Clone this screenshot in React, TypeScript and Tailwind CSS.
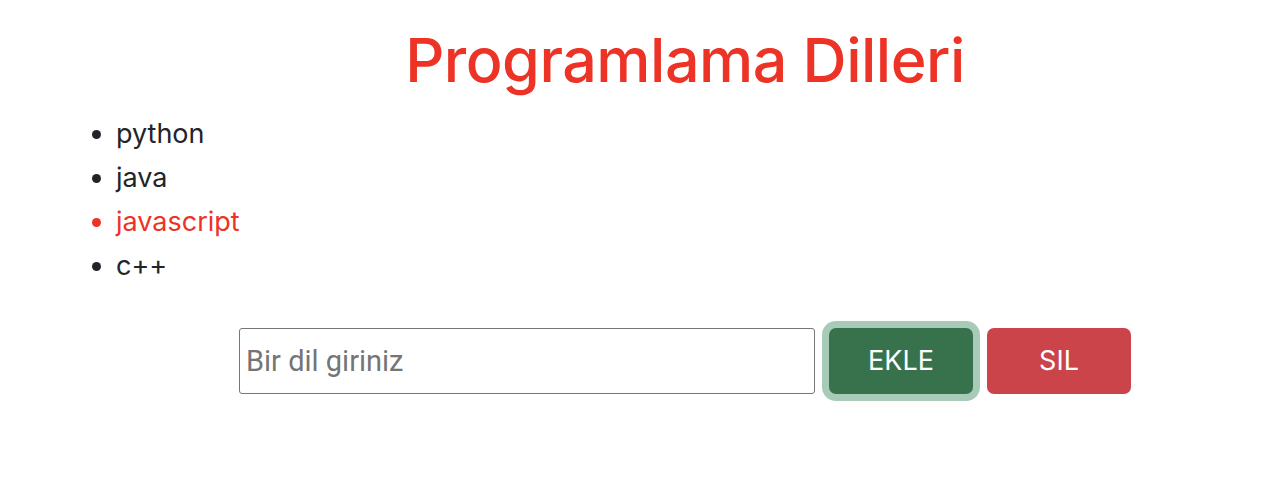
import React from "react";

export default function App() {
  const items = [
    { t: "python", red: false },
    { t: "java", red: false },
    { t: "javascript", red: true },
    { t: "c++", red: false },
  ];
  return (
    <div className="w-[1276px] h-[494px] bg-white font-['Inter','Noto_Sans',sans-serif] text-[#212529]">
      <div className="ml-[94px] flex flex-col">
        <h1 className="text-center text-[61px] leading-[64px] font-medium text-[#ec3326] pt-[28px] tracking-[-0.5px]">
          Programlama Dilleri
        </h1>
        <ul className="mt-[20px] ml-[22px] list-disc pl-0 text-[27px] leading-[44px]">
          {items.map((i) => (
            <li key={i.t} className={i.red ? "text-[#ec3326] marker:text-[#ec3326]" : ""}>
              {i.t}
            </li>
          ))}
        </ul>
        <div className="mt-[40px] flex justify-center items-center gap-[14px]">
          <input
            placeholder="Bir dil giriniz"
            className="w-[576px] h-[66px] border border-[#767676] rounded-[3px] px-[6px] text-[29px] font-['Roboto',sans-serif] placeholder:text-[#757575] outline-none"
          />
          <button className="w-[144px] h-[66px] rounded-[7px] bg-[#37724d] text-white text-[27px] ring-[7px] ring-[#a8cbb8]">
            EKLE
          </button>
          <button className="w-[144px] h-[66px] rounded-[7px] bg-[#cb444a] text-white text-[27px]">
            SIL
          </button>
        </div>
      </div>
    </div>
  );
}
